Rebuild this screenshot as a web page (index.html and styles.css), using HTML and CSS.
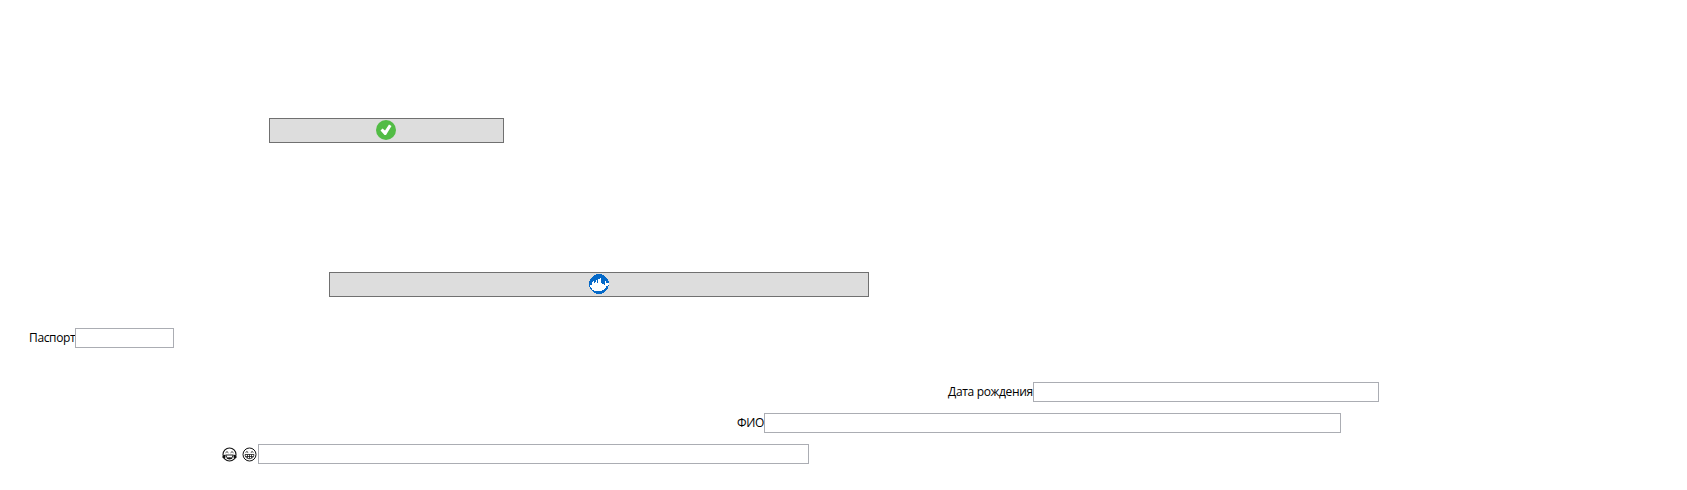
FILE: index.html
```
<!DOCTYPE html>
<html lang="ru">
<head>
<meta charset="utf-8">
<title>Форма</title>
<link rel="stylesheet" href="styles.css">
</head>
<body>
<main class="form">
  <button class="btn btn-confirm" type="button" aria-label="OK">
    <svg class="icon" viewBox="0 0 20 20"><circle cx="10" cy="10" r="10" fill="#52bc45"/><path d="M4.5 10.5 6.5 8.5 9 10.5 13 4.5 15.5 6 10 15H8.5Z" fill="#fff"/></svg>
  </button>
  <button class="btn btn-docker" type="button" aria-label="Docker">
    <svg class="icon" viewBox="0 0 20 20" shape-rendering="crispEdges"><circle cx="10" cy="10" r="10" fill="#0569c8"/><path d="M1 11H3V8H4V7H5V9H6V8H7V6H8V9H9V5H11V4H12V9H13V10H15V11H16V7H17V9H20V11H19V12H17V14H16V15H15V16H13V17H5V16H3V14H2V13H1Z" fill="#fff"/></svg>
  </button>
  <label class="field field-passport"><span class="label">Паспорт</span><input class="input" type="text"></label>
  <label class="field field-birth"><span class="label">Дата рождения</span><input class="input" type="text"></label>
  <label class="field field-name"><span class="label">ФИО</span><input class="input" type="text"></label>
  <label class="field field-mood">
    <span class="faces">
      <svg class="face" viewBox="0 0 15 15"><circle cx="7.5" cy="7.5" r="6.5" fill="#fff" stroke="#111" stroke-width="1.1"/><path d="M3.5 5.8 5 4.6 6.4 5.8M8.6 5.8 10 4.6 11.5 5.8" fill="none" stroke="#111" stroke-width=".8"/><path d="M3.8 8H11.2Q10.7 11.8 7.5 11.8T3.8 8Z" fill="#fff" stroke="#111" stroke-width=".9"/><path d="M3.4 7.5Q.2 8.2.4 10.4 1.8 12.3 3.5 10.6ZM11.6 7.5Q14.8 8.2 14.6 10.4 13.2 12.3 11.5 10.6ZM4.5 11.2Q7.5 9.2 10.5 11.2L9 12.2H6Z" fill="#111"/></svg>
      <svg class="face" viewBox="0 0 15 15"><circle cx="7.5" cy="7.5" r="6.5" fill="#fff" stroke="#111"/><path d="M3.6 5.5Q4.8 3.7 6.2 5.5M8.8 5.5Q10.2 3.7 11.4 5.5" fill="none" stroke="#111" stroke-width=".9"/><path d="M3 7.5H12Q11.7 11.7 7.5 11.7T3 7.5ZM3.5 9.5H11.5M5.5 7.5V11M7.5 7.5V11.7M9.5 7.5V11" fill="none" stroke="#111" stroke-width=".75"/></svg>
    </span><input class="input" type="text">
  </label>
</main>
</body>
</html>
```
FILE: styles.css
```
* { box-sizing: border-box; }

body {
  margin: 0;
  background: #fff;
  color: #000;
  font: 12px/16px "Open Sans", "Noto Sans", sans-serif;
}

.form {
  display: flex;
  flex-direction: column;
  align-items: flex-start;
  width: 1687px;
  height: 490px;
  padding-top: 118px;
}

.btn {
  display: flex;
  align-items: flex-start;
  justify-content: center;
  height: 25px;
  padding: 1px 0 0;
  border: 1px solid #707070;
  border-radius: 0;
  background: #ddd;
}

.btn-confirm { width: 235px; margin-left: 269px; padding-right: 1px; }
.btn-docker { width: 540px; margin: 129px 0 0 329px; }

.icon { flex: none; width: 20px; height: 20px; }

.field { display: flex; height: 20px; }

.field-passport { width: 145px; margin: 31px 0 0 29px; }
.field-birth { width: 431px; margin: 34px 0 0 948px; }
.field-name { width: 604px; margin: 11px 0 0 737px; }
.field-mood { width: 588px; margin: 11px 0 0 221px; }

.label {
  flex: none;
  padding-top: 2px;
  white-space: nowrap;
}

.field-passport .label { width: 46px; letter-spacing: -0.35px; }
.field-birth .label { width: 85px; letter-spacing: -0.33px; }
.field-name .label { width: 27px; letter-spacing: -0.3px; }

.faces {
  display: flex;
  flex: none;
  gap: 5px;
  width: 37px;
  padding: 3px 0 0 1px;
}

.face { flex: none; width: 15px; height: 15px; }

.input {
  flex: 1;
  min-width: 0;
  height: 20px;
  padding: 0 2px;
  border: 1px solid #abadb3;
  border-radius: 0;
  background: #fff;
  font: inherit;
}
```
